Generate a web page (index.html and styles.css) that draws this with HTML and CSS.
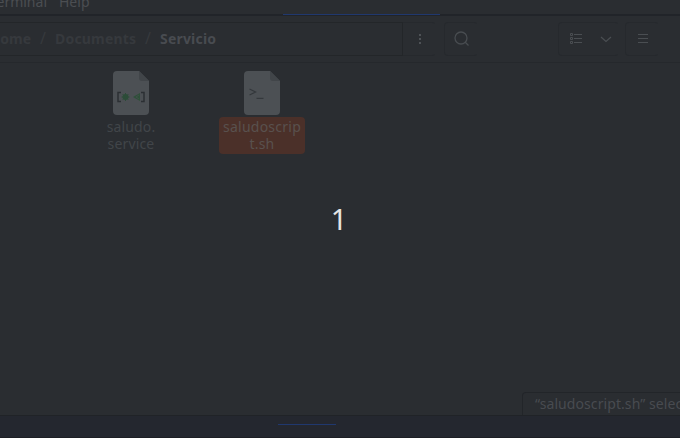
FILE: index.html
```html
<!DOCTYPE html>
<html lang="en">
<head>
<meta charset="utf-8">
<title>Files</title>
<link rel="stylesheet" href="styles.css">
</head>
<body>
<div class="desktop">
  <nav class="menubar"><span class="menu terminal">Terminal</span><span class="menu">Help</span></nav>
  <header class="toolbar">
    <div class="path">
      <span class="crumb home">Home</span><span class="sep">/</span><span class="crumb documents">Documents</span><span class="sep">/</span><span class="crumb current">Servicio</span>
    </div>
    <div class="button more"><svg width="34" height="33"><path d="M16 11h2v2h-2zM16 15h2v2h-2zM16 19h2v2h-2z" fill="#4e5256"/></svg></div>
    <div class="button search"><svg width="34" height="33" fill="none" stroke="#484c50" stroke-width="1.3"><circle cx="16" cy="15" r="6"/><path d="M20 19l3.500 3.500"/></svg></div>
    <div class="button views"><svg width="61" height="33" fill="none" stroke="#4a4e52"><path d="M11.500 10.500h2v2h-2zM11.500 14.500h2v2h-2zM11.500 18.500h2v2h-2zM15 11.500h8M15 15.500h8M15 19.500h8"/><path d="M42 14l5 4.500 5-4.500" stroke-width="1.200"/></svg></div>
    <div class="button burger"><svg width="34" height="33" fill="none" stroke="#4a4e52"><path d="M12 11.500h10M12 15.500h10M12 19.500h10"/></svg></div>
  </header>
  <main class="files">
    <figure class="file">
      <svg width="36" height="44"><path d="M4 0h22l10 10v30q0 4-4 4H4q-4 0-4-4V4q0-4 4-4z" fill="#4c5054"/><path d="M26 0l10 10h-7q-3 0-3-3z" fill="#414549"/><path d="M8 21.500H5v9h3M28 21.500h3v9h-3" fill="none" stroke="#2b2f33" stroke-width="1.500"/><circle cx="12.500" cy="26" r="3" fill="#2c4c38"/><path d="M12.500 22v8M8.500 26h8M9.700 23.200l5.600 5.600M9.700 28.800l5.600-5.600" stroke="#2c4c38"/><path d="M27 22v8l-7-4z" fill="#2e5039"/><path d="M26 24l-3 2 3 2" fill="none" stroke="#4c5054" stroke-width=".6"/></svg>
      <figcaption class="label"><span>saludo.</span><span class="service">service</span></figcaption>
    </figure>
    <figure class="file">
      <svg width="36" height="44"><path d="M4 0h22l10 10v30q0 4-4 4H4q-4 0-4-4V4q0-4 4-4z" fill="#4c5054"/><path d="M26 0l10 10h-7q-3 0-3-3z" fill="#414549"/><path d="M5.500 18l6 3-6 3M12.500 27.300h7" fill="none" stroke="#34383c" stroke-width="1.300"/></svg>
      <figcaption class="label selected"><span class="script">saludoscrip</span><span>t.sh</span></figcaption>
    </figure>
    <div class="status">“saludoscript.sh” selected</div>
  </main>
  <footer class="dock"><div class="indicator"></div></footer>
  <div class="countdown">1</div>
</div>
</body>
</html>
```
FILE: styles.css
```css
* { box-sizing: border-box; }
body { margin: 0; background: #2a2d31; font: 14px/17px "Noto Sans", sans-serif; color: #46494d; }
svg { display: block; }
.desktop { position: relative; width: 680px; height: 438px; overflow: hidden; display: flex; flex-direction: column; }
.menubar { position: relative; height: 16px; flex: none; display: flex; border-bottom: 2px solid #212429; color: #4b4e52; }
.menubar::after { content: ""; position: absolute; left: 283px; top: 14px; width: 157px; height: 1px; background: #20386e; }
.menu { margin-top: -7px; }
.terminal { width: 59px; flex: none; padding-right: 12px; display: flex; justify-content: flex-end; }
.toolbar { height: 47px; flex: none; display: flex; padding-top: 6px; border-bottom: 1px solid #25282c; }
.path { width: 403px; height: 34px; flex: none; display: flex; align-items: center; padding-bottom: 2px; border: 1px solid #232629; border-left: 0; overflow: hidden; font-weight: 700; color: #36393d; }
.crumb { flex: none; white-space: nowrap; }
.home { width: 31px; display: flex; justify-content: flex-end; }
.sep { width: 24px; flex: none; text-align: center; font-weight: 400; font-size: 16px; }
.documents { width: 81px; letter-spacing: .2px; }
.current { color: #484b50; letter-spacing: .2px; }
.button { height: 34px; flex: none; border: 1px solid #26292d; border-radius: 4px; overflow: hidden; }
.more { width: 33px; border-left: 0; border-radius: 0 4px 4px 0; }
.search { width: 34px; margin-left: 8px; border-right-color: transparent; }
.views { width: 61px; margin-left: 80px; border-right-color: transparent; }
.burger { width: 34px; margin-left: 6px; border-right-color: transparent; }
.more { border-right-color: transparent; }
.files { position: relative; height: 352px; flex: none; display: flex; gap: 45px; padding: 8px 0 0 88px; }
.file { width: 86px; height: 84px; margin: 0; display: flex; flex-direction: column; align-items: center; gap: 2px; }
.label { width: 86px; height: 37px; padding-top: 1px; display: flex; flex-direction: column; align-items: center; border-radius: 4px; white-space: nowrap; color: #414549; letter-spacing: .15px; }
.selected { background: #4b3029; color: #59514e; }
.script { letter-spacing: .25px; }
.status { position: absolute; left: 522px; bottom: 0; width: 180px; height: 23px; padding: 2px 0 0 12px; border: 1px solid #222529; border-bottom: 0; border-radius: 4px 0 0; white-space: nowrap; color: #484b50; letter-spacing: .08px; }
.dock { flex: 1; padding: 8px 0 0 278px; background: #24272f; border-top: 1px solid #202327; border-bottom: 1px solid #1d1f25; }
.indicator { width: 58px; height: 1px; background: #20386e; }
.countdown { position: absolute; left: 330px; top: 199px; width: 18px; text-align: center; font: 29px/40px "Noto Sans", sans-serif; color: #e4e4e4; }
```
